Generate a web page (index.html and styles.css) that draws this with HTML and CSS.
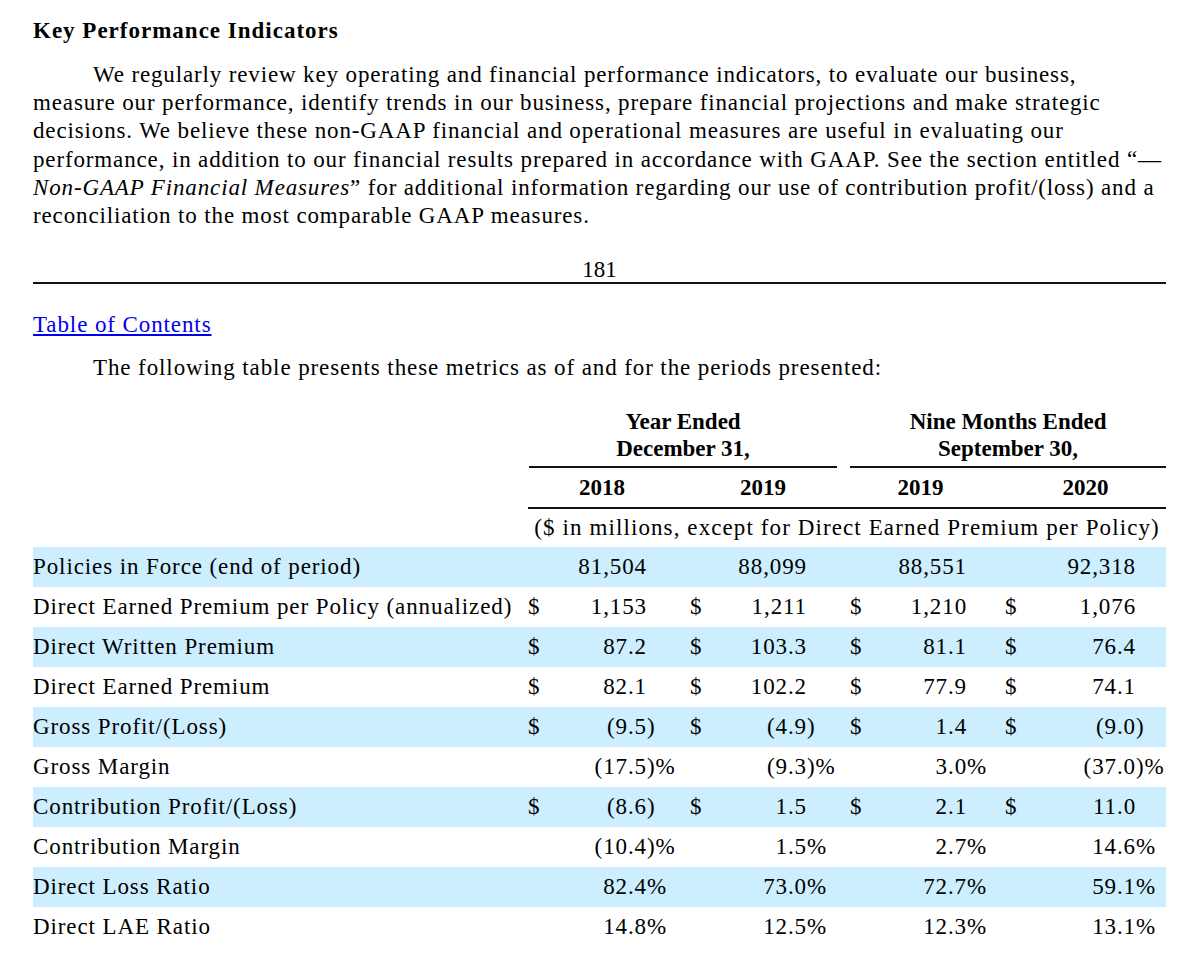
FILE: index.html
```html
<!DOCTYPE html>
<html lang="en">
<head>
<meta charset="utf-8">
<title>Key Performance Indicators</title>
<link rel="stylesheet" href="styles.css">
</head>
<body>
<div class="page">
  <p class="heading">Key Performance Indicators</p>
  <p class="para body-text">We regularly review key operating and financial performance indicators, to evaluate our business,<br>measure our performance, identify trends in our business, prepare financial projections and make strategic<br>decisions. We believe these non-GAAP financial and operational measures are useful in evaluating our<br>performance, in addition to our financial results prepared in accordance with GAAP. See the section entitled “—<br><i>Non-GAAP Financial Measures</i>” for additional information regarding our use of contribution profit/(loss) and a<br>reconciliation to the most comparable GAAP measures.</p>
  <div class="pagenum">181</div>
  <hr class="pagebreak">
  <div class="toc-line"><a class="toc" href="#toc">Table of Contents</a></div>
  <p class="para intro">The following table presents these metrics as of and for the periods presented:</p>

  <table class="kpi">
    <colgroup>
      <col class="c-label">
      <col class="c-dol"><col class="c-num1"><col class="c-suf">
      <col class="c-dol"><col class="c-num"><col class="c-suf">
      <col class="c-dol"><col class="c-num"><col class="c-suf3">
      <col class="c-dol"><col class="c-num4"><col class="c-suf4">
    </colgroup>
    <thead>
      <tr class="group-row">
        <td></td>
        <th colspan="6"><div class="group g1">Year Ended<br>December 31,</div></th>
        <th colspan="6"><div class="group g2">Nine Months Ended<br>September 30,</div></th>
      </tr>
      <tr class="year-row">
        <td></td>
        <th colspan="3" class="yr">2018</th>
        <th colspan="3" class="yr">2019</th>
        <th colspan="3" class="yr">2019</th>
        <th colspan="3" class="yr last">2020</th>
      </tr>
      <tr class="unit-row">
        <td></td>
        <td colspan="12" class="unit">($ in millions, except for Direct Earned Premium per Policy)</td>
      </tr>
    </thead>
    <tbody>
      <tr class="band">
        <td class="label">Policies in Force (end of period)</td>
        <td></td><td class="num">81,504</td><td></td>
        <td></td><td class="num">88,099</td><td></td>
        <td></td><td class="num">88,551</td><td></td>
        <td></td><td class="num">92,318</td><td></td>
      </tr>
      <tr>
        <td class="label">Direct Earned Premium per Policy (annualized)</td>
        <td class="dol">$</td><td class="num">1,153</td><td></td>
        <td class="dol">$</td><td class="num">1,211</td><td></td>
        <td class="dol">$</td><td class="num">1,210</td><td></td>
        <td class="dol">$</td><td class="num">1,076</td><td></td>
      </tr>
      <tr class="band">
        <td class="label">Direct Written Premium</td>
        <td class="dol">$</td><td class="num">87.2</td><td></td>
        <td class="dol">$</td><td class="num">103.3</td><td></td>
        <td class="dol">$</td><td class="num">81.1</td><td></td>
        <td class="dol">$</td><td class="num">76.4</td><td></td>
      </tr>
      <tr>
        <td class="label">Direct Earned Premium</td>
        <td class="dol">$</td><td class="num">82.1</td><td></td>
        <td class="dol">$</td><td class="num">102.2</td><td></td>
        <td class="dol">$</td><td class="num">77.9</td><td></td>
        <td class="dol">$</td><td class="num">74.1</td><td></td>
      </tr>
      <tr class="band">
        <td class="label">Gross Profit/(Loss)</td>
        <td class="dol">$</td><td class="num">(9.5</td><td class="suf">)</td>
        <td class="dol">$</td><td class="num">(4.9</td><td class="suf">)</td>
        <td class="dol">$</td><td class="num">1.4</td><td></td>
        <td class="dol">$</td><td class="num">(9.0</td><td class="suf">)</td>
      </tr>
      <tr>
        <td class="label">Gross Margin</td>
        <td></td><td class="num">(17.5</td><td class="suf">)%</td>
        <td></td><td class="num">(9.3</td><td class="suf">)%</td>
        <td></td><td class="num">3.0</td><td class="suf">%</td>
        <td></td><td class="num">(37.0</td><td class="suf">)%</td>
      </tr>
      <tr class="band">
        <td class="label">Contribution Profit/(Loss)</td>
        <td class="dol">$</td><td class="num">(8.6</td><td class="suf">)</td>
        <td class="dol">$</td><td class="num">1.5</td><td></td>
        <td class="dol">$</td><td class="num">2.1</td><td></td>
        <td class="dol">$</td><td class="num">11.0</td><td></td>
      </tr>
      <tr>
        <td class="label">Contribution Margin</td>
        <td></td><td class="num">(10.4</td><td class="suf">)%</td>
        <td></td><td class="num">1.5</td><td class="suf">%</td>
        <td></td><td class="num">2.7</td><td class="suf">%</td>
        <td></td><td class="num">14.6</td><td class="suf">%</td>
      </tr>
      <tr class="band">
        <td class="label">Direct Loss Ratio</td>
        <td></td><td class="num">82.4</td><td class="suf">%</td>
        <td></td><td class="num">73.0</td><td class="suf">%</td>
        <td></td><td class="num">72.7</td><td class="suf">%</td>
        <td></td><td class="num">59.1</td><td class="suf">%</td>
      </tr>
      <tr>
        <td class="label">Direct LAE Ratio</td>
        <td></td><td class="num">14.8</td><td class="suf">%</td>
        <td></td><td class="num">12.5</td><td class="suf">%</td>
        <td></td><td class="num">12.3</td><td class="suf">%</td>
        <td></td><td class="num">13.1</td><td class="suf">%</td>
      </tr>
    </tbody>
  </table>
</div>
</body>
</html>
```

FILE: styles.css
```css
html, body {
  margin: 0;
  padding: 0;
  background: #ffffff;
}

body {
  font-family: "Liberation Serif", "Times New Roman", Times, serif;
  font-size: 23px;
  color: #000000;
  letter-spacing: 0.9px;
}

.page {
  width: 1133px;
  margin-left: 33px;
  padding-top: 17px;
}

.heading {
  margin: 0;
  font-weight: bold;
  line-height: 28px;
  letter-spacing: 1px;
}

.para {
  margin: 16px 0 0 0;
  text-indent: 60px;
  line-height: 28.2px;
}

.body-text {
  white-space: nowrap;
  letter-spacing: 0.86px;
}

.pagenum {
  margin-top: 28px;
  text-align: center;
  line-height: 24px;
  letter-spacing: 0;
}

.pagebreak {
  margin: 0;
  border: 0;
  border-top: 2px solid #111111;
  height: 0;
}

.toc-line {
  margin-top: 27px;
  line-height: 28px;
}

.toc {
  color: #0000ee;
  text-decoration: underline;
}

.intro {
  margin-top: 15px;
}

.kpi {
  margin-top: 26px;
  width: 1133px;
  border-collapse: collapse;
  table-layout: fixed;
}

.c-label { width: 495px; }
.c-dol { width: 32px; }
.c-num1 { width: 87px; }
.c-num { width: 85px; }
.c-suf { width: 43px; }
.c-suf3 { width: 38px; }
.c-num4 { width: 99px; }
.c-suf4 { width: 30px; }

.kpi td, .kpi th {
  padding: 0;
  white-space: nowrap;
}

.group-row th {
  font-weight: bold;
  text-align: center;
  vertical-align: bottom;
  letter-spacing: 0;
}

.group {
  line-height: 27px;
  padding-bottom: 4px;
  border-bottom: 2px solid #111111;
}

.g1 {
  margin-left: 1px;
  margin-right: 13px;
}

.year-row th {
  height: 39px;
  font-weight: bold;
  text-align: center;
  border-bottom: 2px solid #111111;
  padding-right: 14px;
  letter-spacing: 0;
}

.year-row th.last {
  padding-right: 0;
}

.unit-row td {
  height: 38px;
}

.unit {
  text-align: center;
  padding-right: 15px;
  letter-spacing: 1.1px;
}

.kpi tbody tr {
  height: 40px;
}

.kpi tbody tr.band {
  background: #cceeff;
}

.label {
  text-align: left;
}

.dol {
  text-align: left;
}

.num {
  text-align: right;
}

.suf {
  text-align: left;
}
```
